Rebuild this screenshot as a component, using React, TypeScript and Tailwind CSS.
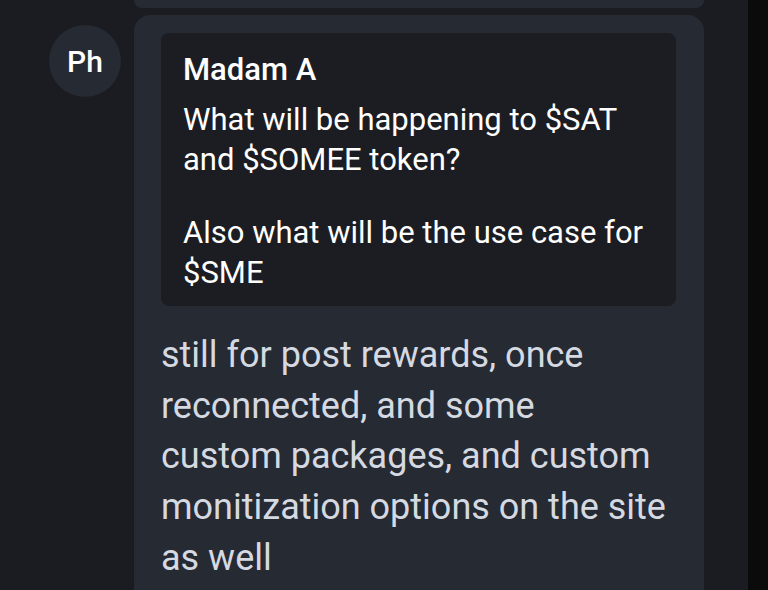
export default function App() {
  return (
    <div className="flex w-[768px] h-[590px] overflow-hidden bg-[#1b1c21] font-['Roboto',sans-serif]">
      <div className="w-[748px] h-full">
        {/* tail of previous message */}
        <div className="ml-[134px] w-[570px] h-[8px] rounded-b-[16px] bg-[#262a33]" />

        <div className="flex items-start mt-[7px]">
          <div className="ml-[49px] mt-[10px] flex items-center justify-center w-[72px] h-[72px] rounded-full bg-[#262a33] text-white text-[30px] font-medium">
            Ph
          </div>

          <div className="ml-[13px] w-[570px] rounded-[16px] bg-[#262a33] pt-[18px] pl-[27px] pr-[28px] pb-[40px]">
            <div className="rounded-[8px] bg-[#1c1d22] pt-[17px] pb-[13px] pl-[22px] pr-[16px] text-white text-[31px] leading-[40px]">
              <div className="font-medium">Madam A</div>
              <div className="mt-[10px]">What will be happening to $SAT</div>
              <div>and $SOMEE token?</div>
              <div className="mt-[33px]">Also what will be the use case for</div>
              <div>$SME</div>
            </div>

            <p className="mt-[24px] text-[#d5d9e1] text-[36px] leading-[50.7px]">
              still for post rewards, once<br />
              reconnected, and some<br />
              custom packages, and custom<br />
              monitization options on the site<br />
              as well
            </p>
          </div>
        </div>
      </div>
      <div className="w-[20px] h-full bg-[#0b0b0b]" />
    </div>
  );
}
